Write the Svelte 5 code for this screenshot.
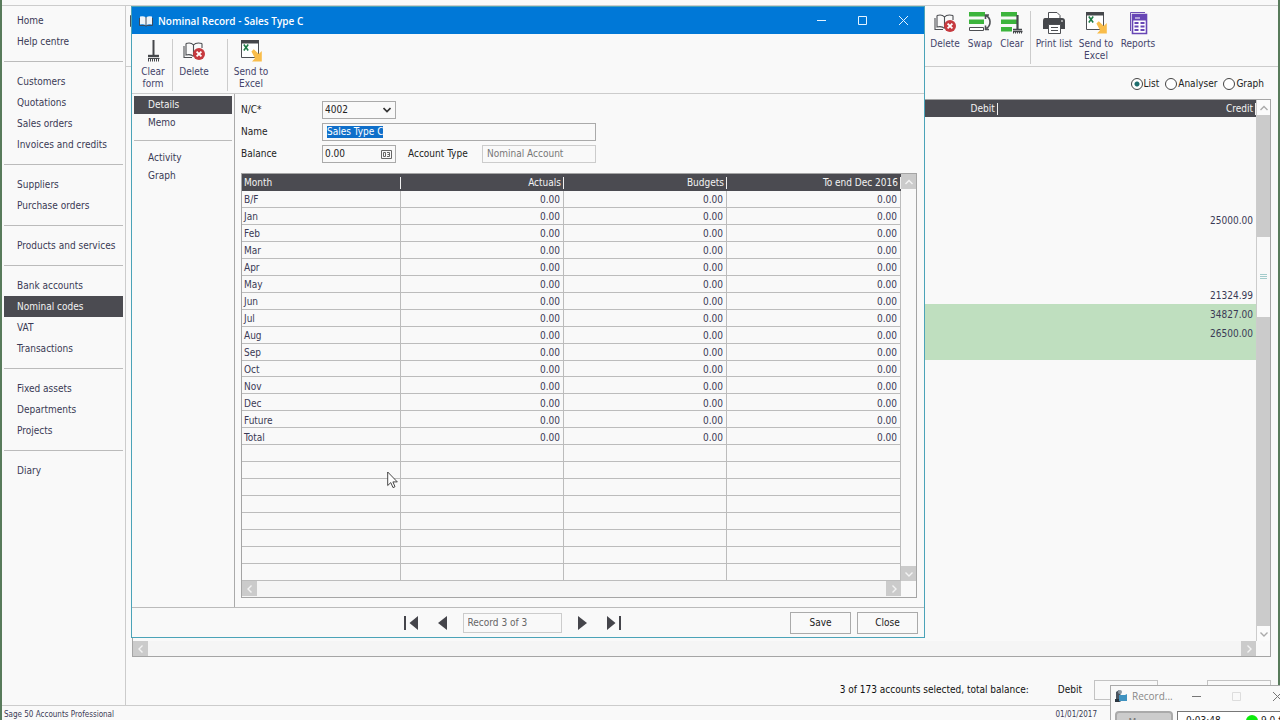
<script>
  import { onMount } from 'svelte';

  const navGroups = [
    ['Home', 'Help centre'],
    ['Customers', 'Quotations', 'Sales orders', 'Invoices and credits'],
    ['Suppliers', 'Purchase orders'],
    ['Products and services'],
    ['Bank accounts', 'Nominal codes', 'VAT', 'Transactions'],
    ['Fixed assets', 'Departments', 'Projects'],
    ['Diary'],
  ];
  const blank = '\u00a0';
  const months = ['B/F', 'Jan', 'Feb', 'Mar', 'Apr', 'May', 'Jun', 'Jul', 'Aug', 'Sep', 'Oct', 'Nov', 'Dec', 'Future', 'Total'];
  const monthRows = Array.from({ length: 23 }, (_, i) => ({ month: months[i] ?? blank, amount: months[i] ? '0.00' : blank }));

  const credits = { 5: '25000.00', 9: '21324.99', 10: '34827.00', 11: '26500.00' };
  const accountRows = Array.from({ length: 28 }, (_, i) => ({ credit: credits[i] ?? blank, selected: i >= 10 && i <= 12 }));

  let view = $state('List');
  let nameInput;
  onMount(() => {
    nameInput.focus();
    nameInput.select();
  });
</script>

{#snippet bookDelete()}
  <svg width="24" height="24" viewBox="0 0 24 24" fill="none" stroke="#4d4f53" stroke-width="1.1">
    <path d="M4 4.5C7 3.6 10 4.2 11.5 6C13 4.2 16 3.6 20 4.5M4 4.5V16C7 15.2 10 15.8 11.5 17.5M11.5 6V17.5M20 4.5V9M2 7V18.5H10" />
    <circle cx="17" cy="15" r="6" fill="#c63a3f" stroke="none" />
    <path d="M14.6 12.6l4.8 4.8m0-4.8l-4.8 4.8" stroke="#fff" stroke-width="1.8" />
  </svg>
{/snippet}

{#snippet excel()}
  <svg width="24" height="24" viewBox="0 0 24 24">
    <path d="M2.5 3V18.5H19.5V3" fill="#fff" stroke="#4d4f53" />
    <path d="M2 1H20V4.5H2z" fill="#45474b" />
    <path d="M4.8 5.6l4.4 5.8m0-5.8l-4.4 5.8" stroke="#1d7b45" stroke-width="1.6" />
    <path d="M12.4 12.6l2.4-2.4 5 4.8 3-3V22.500H13l3-3.200z" fill="#f9bd4b" />
  </svg>
{/snippet}

{#snippet broom()}
  <svg width="24" height="24" viewBox="0 0 24 24" fill="none" stroke="#45474b">
    <path d="M12.5 1V16" stroke-width="2" />
    <path d="M7 17H18" stroke-width="2.4" />
    <path d="M7 19.5H18.5" stroke-width="1" />
    <path d="M7.5 20v2.5M9.5 20v2.5M11.5 20v2.5M13.5 20v2.5M15.5 20v2.5M17.5 20v2.5" />
  </svg>
{/snippet}

{#snippet chevron(d)}
  <svg width="8" height="8" viewBox="0 0 8 8" fill="none" stroke="currentColor" stroke-width="1.4"><path {d} /></svg>
{/snippet}

<div class="desktop">
  <div class="app">
    <div class="shell">
      <nav class="sidebar">
        {#each navGroups as group}
          <ul>
            {#each group as item}
              <li><a href="#top" class:active={item === 'Nominal codes'}>{item}</a></li>
            {/each}
          </ul>
        {/each}
      </nav>

      <main>
        <div class="toolbar">
          <svg class="edge" width="4" height="38" viewBox="0 0 4 38"><path d="M4 4.5H1.5V15.5H4" fill="none" stroke="#4d4f53" /><path d="M2.5 28V35" stroke="#3b3b6b" stroke-width="1" /></svg>
          <span class="spacer"></span>
          <button class="tool">{@render bookDelete()}Delete</button>
          <button class="tool wide">
            <svg width="24" height="24" viewBox="0 0 24 24">
              <path d="M1 1H17V5.500H1zM1 8.500H16V13H1z" fill="#3cb43c" />
              <path d="M1.500 16.500H15.500V19.500H1.500z" fill="#fff" stroke="#4d4f53" />
              <path d="M18 4.500C23 7 23.500 14 18.500 17.500M17 18.500H21M17.500 19V14.500M17 4H21M17.500 3.500V8" fill="none" stroke="#4d4f53" stroke-width="1.600" />
            </svg>Swap</button>
          <button class="tool slim">
            <svg width="24" height="24" viewBox="0 0 24 24">
              <path d="M1 1H17V5.500H1zM1 8.500H17V13H1zM1 16H12V20.500H1z" fill="#3cb43c" />
              <path d="M17.500 4V18" stroke="#45474b" stroke-width="2.200" />
              <path d="M13 18.500H22M13 20.500H22.500" stroke="#45474b" stroke-width="1.300" />
              <path d="M13.500 20v2.500M15.500 20v2.500M17.500 20v2.500M19.500 20v2.500M21.500 20v2.500" stroke="#45474b" />
            </svg>Clear</button>
          <span class="rule"></span>
          <button class="tool list">
            <svg width="24" height="24" viewBox="0 0 24 24">
              <path d="M6.500 7V1.500H15L18 4.500V7" fill="#fff" stroke="#4d4f53" />
              <path d="M3 7H20Q23 7 23 10V18H1V10Q1 7 3 7z" fill="#45474b" />
              <path d="M6.500 13.500H18.500V22.500H6.500z" fill="#fff" stroke="#4d4f53" />
              <path d="M9 16.500H16M9 19.500H16" stroke="#4d4f53" /><path d="M19 10H21" stroke="#fff" />
            </svg>Print list</button>
          <button class="tool list">{@render excel()}Send to Excel</button>
          <button class="tool list">
            <svg width="24" height="24" viewBox="0 0 24 24">
              <path d="M4.500 20V1.500H19" fill="none" stroke="#6d4fb3" />
              <path d="M6.500 3.500H20.500V22.500H6.500z" fill="#fff" stroke="#6746b5" stroke-width="1.600" />
              <path d="M7 4H20V9.500H7z" fill="#6746b5" />
              <path d="M8.500 12H12.500M14.500 12H18.500M8.500 15.500H12.500M14.500 15.500H18.500M8.500 19H12.500M14.500 19H18.500" stroke="#6746b5" stroke-width="2" />
              <path d="M9 7H14" stroke="#fff" />
            </svg>Reports</button>
        </div>

        <div class="views">
          {#each ['List', 'Analyser', 'Graph'] as option}
            <label><input type="radio" name="view" value={option} bind:group={view} />{option}</label>
          {/each}
        </div>

        <div class="panel accounts">
          <div class="grid-area">
            <table>
              <thead><tr><th class="c-debit"><span>Debit</span></th><th class="c-credit"><span>Credit</span></th></tr></thead>
              <tbody>
                {#each accountRows as row}
                  <tr class:selected={row.selected}><td>{blank}</td><td>{row.credit}</td></tr>
                {/each}
              </tbody>
            </table>
          </div>
          <div class="vscroll live">
            <button aria-label="Scroll up">{@render chevron('M0.5 6L4 2.500L7.500 6')}</button>
            <span class="track before"></span>
            <span class="thumb"><i></i><i></i><i></i></span>
            <span class="track after"></span>
            <button aria-label="Scroll down">{@render chevron('M0.5 2.500L4 6L7.500 2.500')}</button>
          </div>
          <div class="hscroll">
            <button aria-label="Scroll left">{@render chevron('M5.500 0.500L2 4L5.500 7.500')}</button>
            <button aria-label="Scroll right">{@render chevron('M2.500 0.500L6 4L2.500 7.500')}</button>
          </div>
          <div class="corner"></div>
        </div>

        <div class="totals">
          <span class="summary">3 of 173 accounts selected, total balance:</span>
          <label for="total-debit">Debit</label>
          <input id="total-debit" readonly />
          <input class="second" aria-label="Credit" readonly />
        </div>
      </main>
    </div>

    <footer class="status"><span>Sage 50 Accounts Professional</span><span class="date">01/01/2017</span></footer>
  </div>

  <section class="window" aria-label="Nominal Record">
    <header>
      <svg width="14" height="12" viewBox="0 0 14 12">
        <path d="M1 1.500Q4.500 .5 7 2.500Q9.500 .5 13 1.500V9.500Q9.500 8.500 7 10.500Q4.500 8.500 1 9.500z" fill="#eef3f8" />
        <path d="M7 2V11M0.500 3V10.500H6L7 11.500L8 10.500H13.500V3" fill="none" stroke="#3c4a5c" />
      </svg>
      <h1>Nominal Record - Sales Type C</h1>
      <button aria-label="Minimise"><svg width="11" height="11" viewBox="0 0 11 11"><path d="M1 5.500H10" /></svg></button>
      <button aria-label="Maximise"><svg width="11" height="11" viewBox="0 0 11 11"><path d="M1.500 1.500H9.500V9.500H1.500z" /></svg></button>
      <button aria-label="Close window"><svg width="11" height="11" viewBox="0 0 11 11"><path d="M1 1L10 10M10 1L1 10" /></svg></button>
    </header>

    <div class="toolbar">
      <button class="tool">{@render broom()}Clear form</button>
      <span class="rule"></span>
      <button class="tool list">{@render bookDelete()}Delete</button>
      <span class="rule far"></span>
      <button class="tool list">{@render excel()}Send to Excel</button>
    </div>

    <div class="body">
      <nav class="tabs">
        <ul><li><a href="#details" class="active">Details</a></li><li><a href="#memo">Memo</a></li></ul>
        <ul><li><a href="#activity">Activity</a></li><li><a href="#graph">Graph</a></li></ul>
      </nav>

      <div class="record">
        <form>
          <label for="nc">N/C*</label>
          <div class="field short">
            <select id="nc"><option>4002</option></select>
            <svg width="8" height="6" viewBox="0 0 8 6"><path d="M0.500 1L4 4.500L7.500 1" fill="none" stroke="#333" stroke-width="1.700" /></svg>
          </div>
          <label for="name">Name</label>
          <div class="field long"><input id="name" bind:this={nameInput} value="Sales Type C" /></div>
          <label for="balance">Balance</label>
          <div class="pair">
            <div class="field short">
              <input id="balance" value="0.00" />
              <svg width="11" height="9" viewBox="0 0 11 9" fill="none" stroke="#666"><path d="M.5 .5H10.500V8.500H.5zM2.500 2.500H4.500V6.500H2.500zM6 2.500H8.500V6.500H6M6.500 4.500H8.500" /></svg>
            </div>
            <label for="type">Account Type</label>
            <div class="field muted"><input id="type" value="Nominal Account" readonly /></div>
          </div>
        </form>

        <div class="panel months">
          <div class="grid-area">
            <table>
              <thead><tr><th class="c-month"><span>Month</span></th><th class="c-num"><span>Actuals</span></th><th class="c-num"><span>Budgets</span></th><th><span>To end Dec 2016</span></th></tr></thead>
              <tbody>
                {#each monthRows as row}
                  <tr><td>{row.month}</td>{#each [0, 1, 2] as _}<td>{row.amount}</td>{/each}</tr>
                {/each}
              </tbody>
            </table>
          </div>
          <div class="vscroll">
            <button aria-label="Scroll months up">{@render chevron('M0.5 6L4 2.500L7.500 6')}</button>
            <button aria-label="Scroll months down">{@render chevron('M0.5 2.500L4 6L7.500 2.500')}</button>
          </div>
          <div class="hscroll">
            <button aria-label="Scroll months left">{@render chevron('M5.500 0.500L2 4L5.500 7.500')}</button>
            <button aria-label="Scroll months right">{@render chevron('M2.500 0.500L6 4L2.500 7.500')}</button>
          </div>
          <div class="corner"></div>
        </div>
      </div>
    </div>

    <div class="actions">
      <span></span>
      <div class="pager">
        <button aria-label="First record"><svg width="16" height="14" viewBox="0 0 16 14"><path d="M1 0H3V14H1zM15 0V14L6.500 7z" /></svg></button>
        <button aria-label="Previous record"><svg width="16" height="14" viewBox="0 0 16 14"><path d="M12 0V14L3 7z" /></svg></button>
        <input aria-label="Record position" value="Record 3 of 3" readonly />
        <button aria-label="Next record"><svg width="16" height="14" viewBox="0 0 16 14"><path d="M4 0V14L13 7z" /></svg></button>
        <button aria-label="Last record"><svg width="16" height="14" viewBox="0 0 16 14"><path d="M13 0H15V14H13zM1 0V14L9.500 7z" /></svg></button>
      </div>
      <div class="confirm"><button>Save</button><button>Close</button></div>
    </div>
  </section>

  <section class="recorder" aria-label="Recorder">
    <header>
      <svg width="14" height="14" viewBox="0 0 14 14">
        <path d="M2 3L5 1L6.500 3V13H2z" fill="#4a5560" /><path d="M5 6H11L13 5V12H5z" fill="#3f92c0" /><path d="M1 10H5V13H1z" fill="#2c3640" /><circle cx="6" cy="3" r="2" fill="#8b98a3" />
      </svg>
      <h2>Record...</h2>
      <svg class="controls" width="92" height="11" viewBox="0 0 92 11" fill="none"><path d="M2 5.500H11" stroke="#777" /><path d="M42.500 1.500H50.500V9.500H42.500z" stroke="#ddd" /><path d="M83 1L92 10M92 1L83 10" stroke="#777" /></svg>
    </header>
    <div class="rec-body">
      <button>More...</button>
      <div class="readout"><span class="time">0:03:48</span><span class="dot"></span><span>9.0 fps</span></div>
    </div>
  </section>

  <svg class="pointer" width="12" height="18" viewBox="0 0 12 18"><path d="M.7 1V14.500L3.800 11.600L6 16.600L8 15.700L5.900 10.900H10.300z" fill="#fff" stroke="#333" stroke-width=".9" /></svg>
</div>

<style>
  :global(body) {
    margin: 0;
    background: #f9f9f9;
  }
  .desktop {
    position: relative;
    height: 100vh;
    min-height: 600px;
    overflow: hidden;
    box-sizing: border-box;
    padding: 0 2px;
    background: #587b5b;
    color: #3a3a55;
    font: 10px/12px 'DejaVu Sans Condensed', 'DejaVu Sans', sans-serif;
  }
  .desktop * {
    box-sizing: border-box;
  }
  button, input, select {
    margin: 0;
    padding: 0;
    border: 0;
    border-radius: 0;
    background: none;
    color: inherit;
    font: inherit;
    outline: none;
  }
  svg {
    display: block;
    flex: none;
  }
  ul {
    list-style: none;
    margin: 0;
    padding: 0;
  }
  a {
    display: block;
    color: inherit;
    text-decoration: none;
  }
  .app {
    height: 100%;
    padding-top: 5px;
    background: #f9f9f9;
    display: flex;
    flex-direction: column;
  }
  .shell {
    flex: 1;
    min-height: 0;
    display: flex;
    border-top: 1px solid #ccc;
  }
  .sidebar {
    width: 124px;
    flex: none;
    padding: 4px 2px;
    border-right: 1px solid #ccc;
  }
  .sidebar ul + ul::before {
    content: '';
    display: block;
    height: 1px;
    margin: 9px 0;
    background: #bbb;
  }
  .sidebar a {
    height: 21px;
    padding-left: 13px;
    line-height: 21px;
    white-space: nowrap;
  }
  .sidebar a.active, .tabs a.active {
    background: #4b4b51;
    color: #f3f3f3;
  }
  main {
    flex: 1;
    min-width: 0;
    display: flex;
    flex-direction: column;
  }
  .toolbar {
    display: flex;
    flex: none;
    height: 61px;
    border-bottom: 1px solid #ccc;
  }
  main .toolbar {
    padding: 5px 119px 2px 3px;
  }
  .spacer {
    flex: 1;
  }
  .tool {
    display: flex;
    flex-direction: column;
    align-items: center;
    gap: 3px;
    width: 34px;
    text-align: center;
    color: #44446a;
  }
  .tool.wide {
    width: 36px;
  }
  .tool.slim {
    width: 28px;
  }
  .tool.list {
    width: 42px;
  }
  .rule {
    width: 1px;
    background: #ccc;
    margin: 0 2px 0 4px;
  }
  .views {
    height: 32px;
    flex: none;
    display: flex;
    align-items: center;
    justify-content: flex-end;
    gap: 6px;
    padding: 2px 14px 0 0;
    color: #222;
  }
  .views label {
    display: flex;
    align-items: center;
    gap: 1px;
  }
  .views input {
    appearance: none;
    width: 12px;
    height: 12px;
    border: 1px solid #444;
    border-radius: 50%;
    background: #fff;
  }
  .views input:checked {
    background: radial-gradient(circle, #1d6d6d 0 2px, #fff 3px);
  }
  .panel {
    display: grid;
    flex: 1;
    min-height: 0;
    border: 1px solid #a5a5a5;
  }
  .accounts {
    grid-template: minmax(0, 1fr) 15px / minmax(0, 1fr) 14px;
    margin: 0 7px 0 6px;
  }
  .months {
    grid-template: minmax(0, 1fr) 16px / minmax(0, 1fr) 15px;
  }
  .grid-area {
    min-height: 0;
  }
  table {
    width: 100%;
    height: 100%;
    table-layout: fixed;
    border-spacing: 0;
    line-height: 12px;
  }
  thead tr {
    height: 17px;
  }
  th {
    padding: 0;
    background: #4b4b51;
    color: #f3f3f3;
    font-weight: normal;
    text-align: right;
  }
  th span {
    display: block;
    padding: 0 2px;
    border-right: 1px solid #f0f0f0;
  }
  td {
    padding: 3px 3px 0;
    text-align: right;
  }
  .c-debit {
    width: 77%;
  }
  .selected td {
    background: #bfdfbf;
  }
  .c-month {
    width: 159px;
  }
  .c-num {
    width: 163px;
  }
  .c-month, .months td:first-child {
    text-align: left;
  }
  .months td {
    border: solid #bcbcbc;
    border-width: 0 1px 1px 0;
  }
  .months td:first-child {
    padding-left: 2px;
  }
  .vscroll {
    display: flex;
    flex-direction: column;
    justify-content: space-between;
  }
  .hscroll {
    display: flex;
    justify-content: space-between;
    background: #f5f5f5;
  }
  .vscroll button, .hscroll button {
    display: grid;
    place-items: center;
    flex: none;
    width: 15px;
    height: 15px;
    background: #cbcbcb;
    color: #f3f3f3;
  }
  .vscroll.live button {
    width: auto;
    background: #fbfbfb;
    color: #aaa;
  }
  .live {
    border-left: 1px solid #ccc;
  }
  .track {
    background: #cbcbcb;
  }
  .before {
    flex: 122;
  }
  .after {
    flex: 310;
  }
  .thumb {
    flex: 81;
    display: flex;
    flex-direction: column;
    align-items: center;
    justify-content: center;
    gap: 1px;
  }
  .thumb i {
    width: 7px;
    height: 1px;
    background: #a3cccc;
  }
  .totals {
    flex: none;
    height: 48px;
    padding: 22px 7px 4px 0;
    display: flex;
    align-items: center;
    justify-content: flex-end;
    color: #111;
  }
  .summary {
    margin-right: 29px;
  }
  .totals input {
    width: 64px;
    height: 20px;
    margin-left: 12px;
    border: 1px solid #c3c3c3;
  }
  .totals .second {
    margin-left: 49px;
  }
  .status {
    flex: none;
    height: 15px;
    display: flex;
    justify-content: space-between;
    padding: 2px 181px 0 2px;
    border-top: 1px solid #ccc;
    font-size: 8px;
    line-height: 14px;
  }

  .window {
    position: absolute;
    left: 131px;
    top: 6px;
    width: 794px;
    height: 632px;
    display: flex;
    flex-direction: column;
    border: 1px solid #4ba3b8;
    background: #f9f9f9;
  }
  .window header {
    display: flex;
    align-items: center;
    flex: none;
    height: 27px;
    padding-left: 7px;
    background: #0078d7;
    color: #fff;
  }
  h1, h2 {
    flex: 1;
    margin: 0 0 0 5px;
    font: 600 10px/16px 'Open Sans', 'Noto Sans', sans-serif;
  }
  .window header button {
    display: grid;
    place-items: center;
    width: 41px;
    height: 26px;
  }
  .window header button path {
    fill: none;
    stroke: #e4f3ff;
  }
  .window .toolbar {
    height: 60px;
    padding: 5px 0 2px 4px;
  }
  .window .rule {
    margin: 0 0 0 2px;
  }
  .window .far {
    margin: 0 2px 0 12px;
  }
  .body {
    flex: 1;
    min-height: 0;
    display: flex;
  }
  .tabs {
    flex: none;
    width: 103px;
    padding: 2px 2px 0;
    border-right: 1px solid #aaa;
  }
  .tabs ul + ul::before {
    content: '';
    display: block;
    height: 1px;
    margin: 8px 0;
    background: #bbb;
  }
  .tabs a {
    height: 18px;
    padding-left: 14px;
    line-height: 18px;
  }
  .record {
    flex: 1;
    min-width: 0;
    display: flex;
    flex-direction: column;
    gap: 10px;
    padding: 7px 7px 9px 6px;
  }
  form {
    display: grid;
    grid-template-columns: 81px 1fr;
    gap: 4px 0;
    align-items: center;
    color: #222;
  }
  .field {
    display: flex;
    align-items: center;
    height: 18px;
    padding: 0 3px 0 2px;
    border: 1px solid #aaa;
  }
  .field input, .field select {
    flex: 1;
    min-width: 0;
    appearance: none;
  }
  .short {
    width: 74px;
  }
  .short select + svg {
    margin-right: 1px;
  }
  .long {
    width: 274px;
    padding-left: 4px;
  }
  .long input::selection {
    background: #0f6fca;
    color: #fff;
  }
  .pair {
    display: flex;
    align-items: center;
    width: 274px;
  }
  .pair label {
    margin: 0 auto 0 12px;
  }
  .muted {
    width: 114px;
    padding-left: 4px;
    border-color: #ccc;
    color: #777;
  }
  .actions {
    flex: none;
    display: grid;
    grid-template-columns: 1fr auto 1fr;
    align-items: center;
    height: 30px;
    padding: 0 6px;
    border-top: 1px solid #bbb;
  }
  .pager {
    display: flex;
    align-items: center;
    gap: 16px;
    margin-left: -32px;
  }
  .pager svg {
    fill: #45454b;
  }
  .pager input {
    width: 99px;
    height: 20px;
    margin: 0 -4px;
    padding-left: 4px;
    border: 1px solid #ccc;
    color: #666;
  }
  .confirm {
    display: flex;
    justify-content: flex-end;
    gap: 6px;
    color: #222;
  }
  .confirm button {
    width: 61px;
    height: 22px;
    border: 1px solid #aaa;
  }

  .recorder {
    position: absolute;
    right: -20px;
    bottom: -20px;
    width: 190px;
    height: 55px;
    border: 1px solid #aaa;
    background: #f9f9f9;
    color: #222;
  }
  .recorder header {
    display: flex;
    align-items: center;
    height: 20px;
    padding-left: 3px;
  }
  .recorder h2 {
    flex: none;
    width: 58px;
    margin-left: 4px;
    font-weight: 400;
    color: #888;
  }
  .rec-body {
    display: flex;
    gap: 4px;
    padding: 5px 0 0 4px;
  }
  .rec-body button {
    width: 58px;
    height: 24px;
    border: 2px solid #aaa;
    border-radius: 4px;
    background: #ccc;
    color: #777;
  }
  .readout {
    flex: 1;
    display: flex;
    align-items: flex-start;
    height: 24px;
    padding: 3px 0 0 8px;
    border: 1px solid #777;
    background: #fff;
  }
  .time {
    width: 60px;
  }
  .dot {
    width: 12px;
    height: 12px;
    margin-right: 3px;
    border-radius: 50%;
    background: #0ceb0c;
  }
  .pointer {
    position: absolute;
    left: 387px;
    top: 471px;
  }
</style>
